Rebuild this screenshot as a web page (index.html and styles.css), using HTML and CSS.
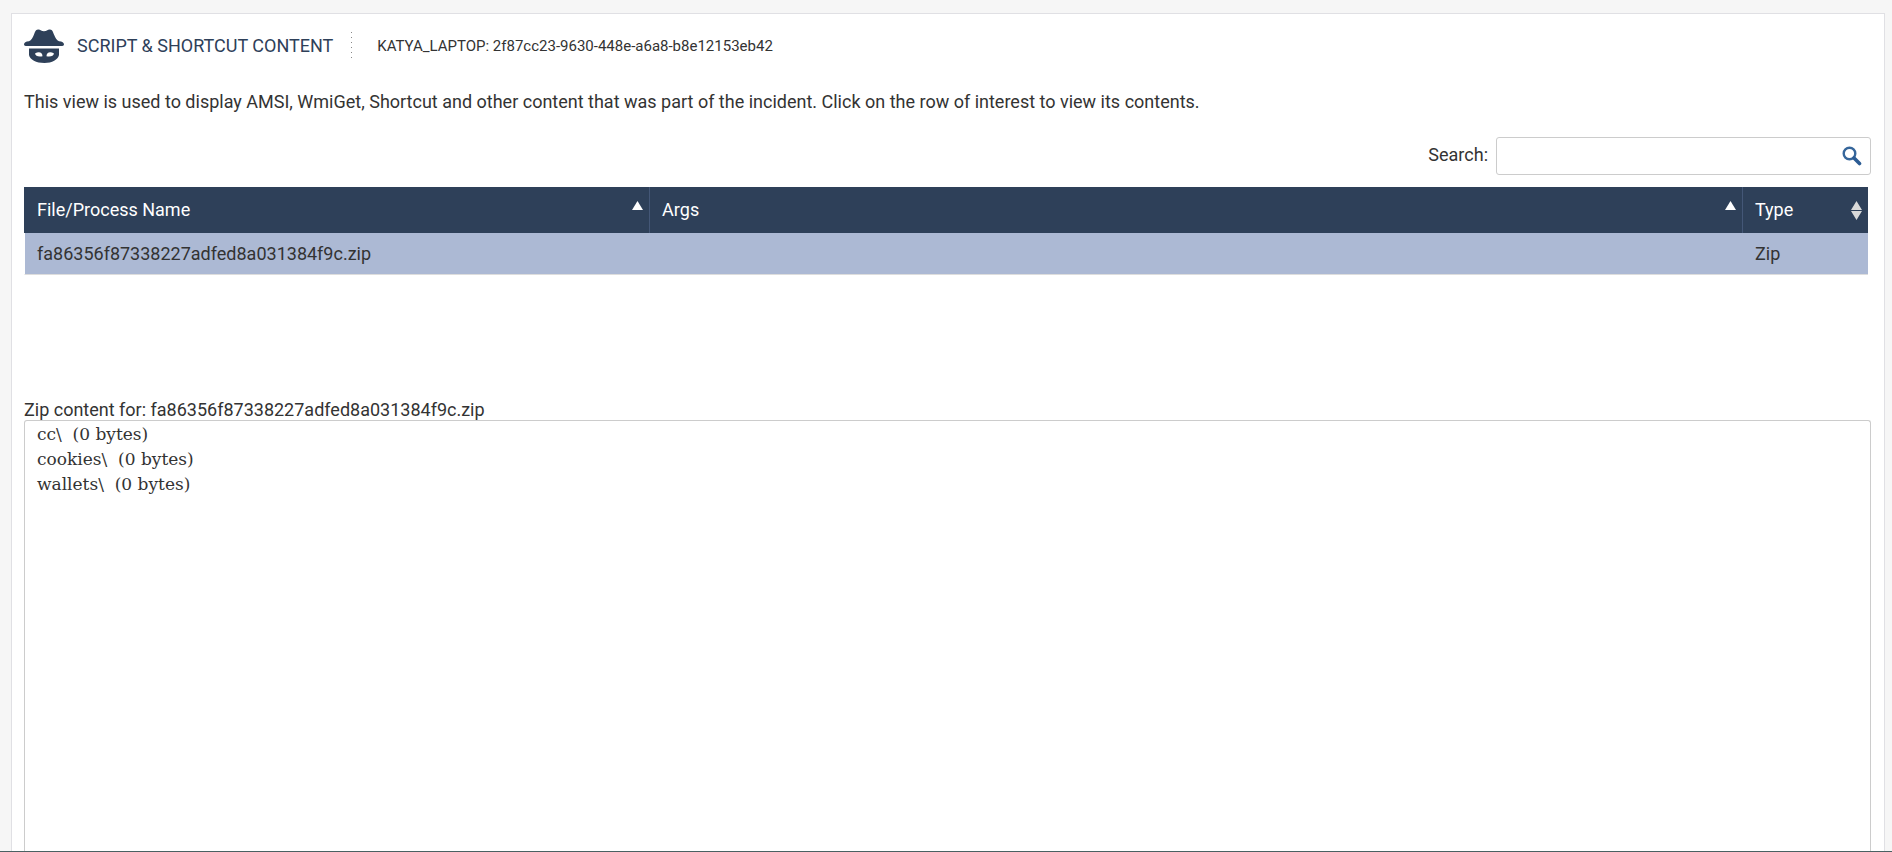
FILE: index.html
```html
<!DOCTYPE html>
<html lang="en">
<head>
<meta charset="utf-8">
<title>Script &amp; Shortcut Content</title>
<link rel="stylesheet" href="styles.css">
</head>
<body>
<main class="panel">
  <header class="head">
    <svg class="logo" viewBox="0 0 40 34" aria-hidden="true">
      <path fill="#2e4059" d="M0 15.5C0 13.6 1.8 12.6 5 12.3C7.5 11 8.6 9 9.8 6C11 3 11.5.6 14 .4C16.400 .2 17.500 2.200 20 2.200S23.600 .2 26 .4C28.500 .6 29 3 30.200 6C31.400 9 32.500 11 35 12.300C38.200 12.600 40 13.600 40 15.500C40 17 38.500 17 37 17H3C1.500 17 0 17 0 15.500Z"/>
      <path fill="#2e4059" fill-rule="evenodd" d="M5 19.500H35V26C34 30.500 28 34 20.500 34C12 34 6 30.500 5 26ZM11 24.500C11.500 26.800 14 28 18.500 27.200C18.500 23.500 15 22 11 24.500ZM30 24.500C29.500 26.800 27 28 22.500 27.200C22.500 23.500 26 22 30 24.500Z"/>
    </svg>
    <h1 class="title">SCRIPT &amp; SHORTCUT CONTENT</h1>
    <svg class="divider" viewBox="0 0 1 28" aria-hidden="true"><path d="M.5 0V28" stroke="#888" stroke-dasharray="1 4"/></svg>
    <span class="host">KATYA_LAPTOP: 2f87cc23-9630-448e-a6a8-b8e12153eb42</span>
  </header>
  <p class="intro">This view is used to display AMSI, WmiGet, Shortcut and other content that was part of the incident. Click on the row of interest to view its contents.</p>
  <div class="search">
    <label for="search">Search:</label>
    <div class="search-box">
      <input id="search" type="text">
      <svg class="lens" viewBox="0 0 20 20" aria-hidden="true"><circle cx="7.500" cy="7.500" r="5.800" fill="none" stroke="#36669b" stroke-width="2.400"/><path d="M12 12L17.500 17.500" stroke="#2c5c94" stroke-width="3.600" stroke-linecap="round"/></svg>
    </div>
  </div>
  <div class="table-wrap">
    <table class="files">
      <thead>
        <tr>
          <th class="col-name" scope="col"><div class="th">File/Process Name<svg class="sort" viewBox="0 0 11 19" aria-hidden="true"><path d="M5.500 0L11 9H0Z" fill="#fff"/></svg></div></th>
          <th class="col-args" scope="col"><div class="th">Args<svg class="sort" viewBox="0 0 11 19" aria-hidden="true"><path d="M5.500 0L11 9H0Z" fill="#fff"/></svg></div></th>
          <th class="col-type" scope="col"><div class="th">Type<svg class="sort" viewBox="0 0 11 19" aria-hidden="true"><path d="M5.500 0L11 9H0ZM0 10H11L5.500 19Z" fill="#d9d9d9"/></svg></div></th>
        </tr>
      </thead>
      <tbody>
        <tr><td>fa86356f87338227adfed8a031384f9c.zip</td><td></td><td>Zip</td></tr>
      </tbody>
    </table>
  </div>
  <label class="content-label" for="content">Zip content for: fa86356f87338227adfed8a031384f9c.zip</label>
  <textarea class="content" id="content" readonly spellcheck="false">cc\  (0 bytes)
cookies\  (0 bytes)
wallets\  (0 bytes)</textarea>
</main>
</body>
</html>
```
FILE: styles.css
```css
* { box-sizing: border-box; }
body {
  margin: 0;
  height: 100vh;
  overflow: hidden;
  display: flex;
  flex-direction: column;
  padding: 13px 7px 0 11px;
  background: #f6f6f6;
  border-bottom: 1px solid #4a6062;
  font: 18px/24px Roboto, "Liberation Sans", sans-serif;
  color: #333;
}
.panel {
  flex: 1;
  min-height: 0;
  display: flex;
  flex-direction: column;
  padding: 12px 13px 0 12px;
  background: #fff;
  border: 1px solid #e0e0e4;
  border-bottom: 0;
}
.head { display: flex; align-items: center; height: 40px; }
.logo { width: 40px; height: 34px; }
.title { margin: 0 18px 0 13px; font-size: 18px; line-height: 24px; font-weight: 400; color: #2e4059; }
.divider { width: 1px; height: 28px; }
.host { margin-left: 25px; font-size: 15px; }
.intro { margin: 24px 0 23px; }
.search { display: flex; justify-content: flex-end; gap: 8px; }
.search label { line-height: 36px; }
.search-box { position: relative; width: 375px; }
.search-box input {
  display: block;
  width: 100%;
  height: 38px;
  padding: 0 40px 0 10px;
  border: 1px solid #ccc;
  border-radius: 3px;
  font: inherit;
}
.lens { position: absolute; right: 9px; top: 9px; width: 20px; height: 20px; }
.table-wrap { margin-top: 12px; height: 213px; padding-right: 3px; }
.files { width: 100%; table-layout: fixed; border-collapse: separate; border-spacing: 0; text-align: left; }
.files th {
  height: 46px;
  padding: 0 6px 0 12px;
  background: #2e4059;
  border-left: 1px solid #445777;
  color: #fff;
  font-weight: 400;
}
.files th:first-child { border-left-color: #2e4059; }
.files td { height: 42px; padding: 0 12px 0 13px; background: #acb9d4; border-bottom: 1px solid #ddd; }
.files td:first-child { padding-left: 12px; border-left: 1px solid #fff; }
.col-name { width: 33.9%; }
.col-type { width: 126px; }
.th { display: flex; justify-content: space-between; align-items: center; }
.sort { width: 11px; height: 19px; }
.content-label { line-height: 20px; }
.content {
  flex: 1;
  display: block;
  width: 100%;
  min-height: 0;
  padding: 1px 12px;
  border: 1px solid #ccc;
  border-bottom: 0;
  border-radius: 3px 3px 0 0;
  outline: 0;
  resize: none;
  font: 17px/25px "Roboto Slab", "DejaVu Serif", serif;
  color: #333;
}
```
